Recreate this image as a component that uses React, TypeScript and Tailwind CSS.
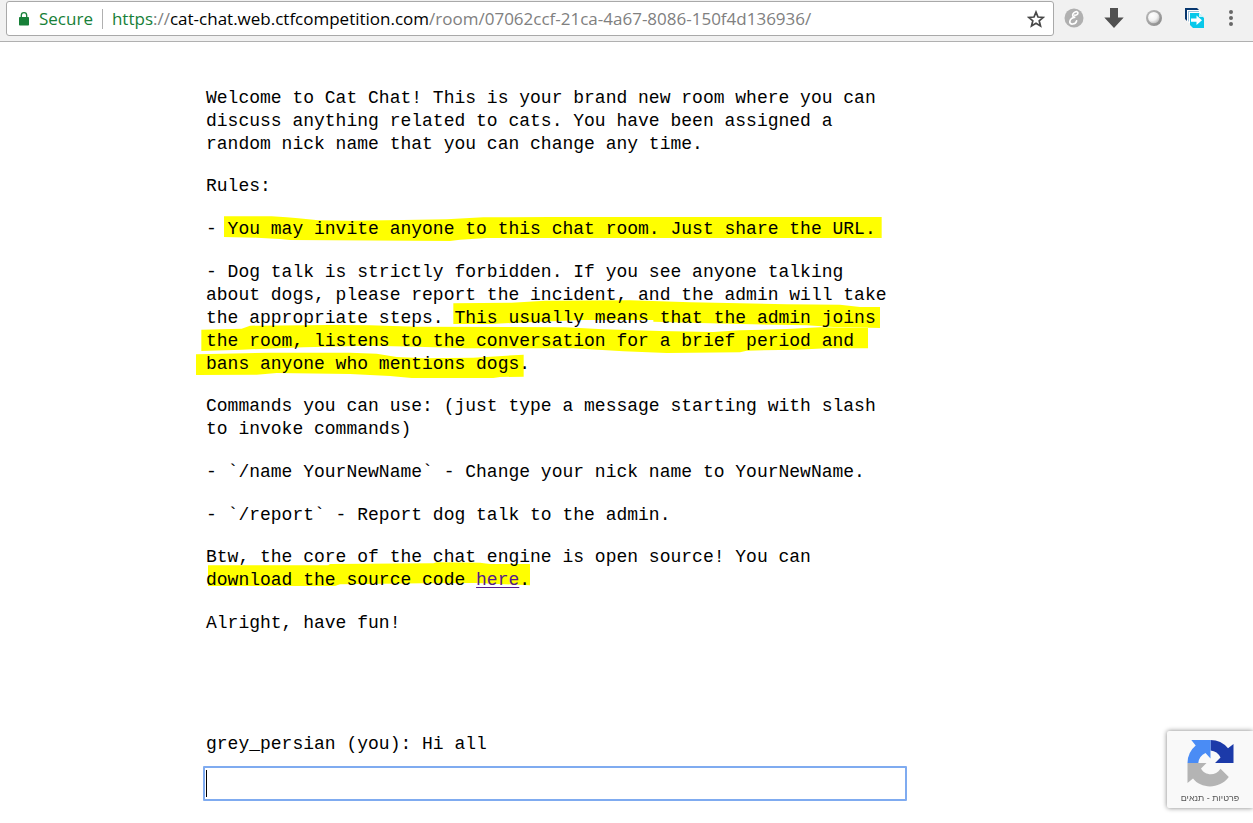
import React from "react";

function Marker({ className, viewBox, shapes }: { className: string; viewBox: string; shapes: string[] }) {
  return (
    <svg
      aria-hidden="true"
      className={`absolute top-0 left-0 -z-10 w-[700px] overflow-visible ${className}`}
      viewBox={viewBox}
      fill="#ffff00"
    >
      {shapes.map((points) => (
        <polygon key={points} points={points} />
      ))}
    </svg>
  );
}

function LockIcon() {
  return (
    <svg aria-hidden="true" className="h-[14px] w-[10px]" viewBox="0 0 10 14">
      <rect x="0" y="5" width="10" height="8.5" rx="0.8" fill="#178038" />
      <path d="M2.3 5.5V3.4a2.7 2.7 0 0 1 5.4 0v2.1" fill="none" stroke="#178038" strokeWidth="1.3" />
    </svg>
  );
}

function StarIcon() {
  return (
    <svg aria-hidden="true" className="h-[18px] w-[18px]" viewBox="0 0 18 18">
      <path
        d="M9 2.1l2 4.9 5.3.4-4.1 3.4 1.3 5.2L9 13.2 4.5 16l1.3-5.2L1.7 7.4 7 7z"
        fill="none"
        stroke="#484848"
        strokeWidth="1.7"
      />
    </svg>
  );
}

function ScriptIcon() {
  return (
    <svg aria-hidden="true" className="h-5 w-5" viewBox="0 0 20 20">
      <circle cx="10" cy="10" r="9.5" fill="#b0b0b0" />
      <path
        d="M10.8 7.2c1.5.2 3.2-.9 3.1-2.3-.1-1.2-1.5-1.5-2.8-.9-1.900.8-2.900 2.700-2.200 4.200.4.900 1.300 1.200 2.400 1-3 .3-5.400 2.300-5.500 4.500 0 1.600 1.200 2.500 2.800 2.300 2-.2 3.700-1.600 4-3.200"
        fill="none"
        stroke="#fff"
        strokeWidth="1.7"
        strokeLinecap="round"
      />
    </svg>
  );
}

function ArrowDownIcon() {
  return (
    <svg aria-hidden="true" className="h-5 w-5" viewBox="0 0 20 20">
      <path d="M6 0h8v9.5h5.7L10 20 .3 9.5H6z" fill="#505050" />
    </svg>
  );
}

function OrbIcon() {
  return (
    <svg aria-hidden="true" className="h-4 w-4" viewBox="0 0 16 16">
      <defs>
        <linearGradient id="orb-ring" x1="0" y1="0" x2="1" y2="1">
          <stop offset="0" stopColor="#bcbcbc" />
          <stop offset="1" stopColor="#888888" />
        </linearGradient>
        <radialGradient id="orb-face" cx=".35" cy=".3" r=".75">
          <stop offset="0" stopColor="#fff" />
          <stop offset=".6" stopColor="#f2f2f2" />
          <stop offset="1" stopColor="#bdbdbd" />
        </radialGradient>
      </defs>
      <circle cx="8" cy="8" r="8" fill="url(#orb-ring)" />
      <circle cx="7.8" cy="7.6" r="5.7" fill="url(#orb-face)" />
    </svg>
  );
}

function PagesIcon() {
  return (
    <svg aria-hidden="true" className="h-5 w-5" viewBox="0 0 20 20">
      <path d="M0 0h12l2 2H2v11l-2-2z" fill="#07376f" />
      <path d="M2 2h12l2 2v11H4l-2-2z" fill="#fff" />
      <path d="M3 3h11v1H4v10l-1-1z" fill="#9fc3dc" />
      <path d="M5 5h9l5 5v10H8l-3-3z" fill="#08c8ea" />
      <path d="M14 5v4h5z" fill="#c7f3fb" />
      <path d="M6 10.5h5.5v-3l5.5 4.8-5.5 4.7v-3.2H6z" fill="#fff" />
    </svg>
  );
}

function MoreIcon() {
  return (
    <svg aria-hidden="true" className="h-[18px] w-1" viewBox="0 0 4 18" fill="#686868">
      <circle cx="2" cy="3" r="2" />
      <circle cx="2" cy="9" r="2" />
      <circle cx="2" cy="15" r="2" />
    </svg>
  );
}

function RecaptchaLogo() {
  return (
    <svg aria-hidden="true" className="h-12 w-12" viewBox="0 0 48 48">
      <path d="M24.5 1A23 23 0 0 1 42 9.2L47.5 5v19H29l5.5-5.5A12.5 12.5 0 0 0 24.5 11.5z" fill="#1c3aa9" />
      <path d="M24.5 1v18.5l-5-5.5A12.5 12.5 0 0 0 12.3 24H1.5A23 23 0 0 1 9.7 6.5L5.3 1z" fill="#4a8cf5" />
      <path d="M1.5 24h19L15 29.5c3.5 7 14.500 8.200 19.500.3l8.300 8.200C33.500 50.500 15 50 7 39.500L1.500 44z" fill="#b4b4b4" />
    </svg>
  );
}

export default function App() {
  return (
    <div className="flex min-h-screen flex-col bg-white">
      <header className="flex h-[42px] items-start border-b border-[#b0b0b0] bg-[#f1f1f1] pr-[20px] pl-[6px]">
        <div className="mt-px flex h-[35px] min-w-0 flex-1 items-center rounded-[3px] border border-[#a9a9a9] bg-white pr-2 pl-3 font-['Open_Sans','Noto_Sans',sans-serif] text-[17px] leading-6">
          <LockIcon />
          <span className="ml-[10px] text-[#178038]">Secure</span>
          <span className="mx-[9px] h-5 w-px bg-[#b0b0b0]" />
          <span className="min-w-0 flex-1 truncate text-[#808080]">
            <span className="text-[#178038]">https</span>://<span className="text-black">cat-chat.web.ctfcompetition.com</span>
            /room/07062ccf-21ca-4a67-8086-150f4d136936/
          </span>
          <button type="button" aria-label="Bookmark this page">
            <StarIcon />
          </button>
        </div>
        <nav className="ml-[10px] flex h-9 items-center">
          <button type="button" aria-label="Script extension">
            <ScriptIcon />
          </button>
          <button type="button" aria-label="Downloads" className="ml-5">
            <ArrowDownIcon />
          </button>
          <button type="button" aria-label="Status" className="ml-[22px]">
            <OrbIcon />
          </button>
          <button type="button" aria-label="Pages" className="ml-[23px]">
            <PagesIcon />
          </button>
          <button type="button" aria-label="Menu" className="ml-6">
            <MoreIcon />
          </button>
        </nav>
      </header>

      <main className="ml-[203px] w-full max-w-[704px] pt-[45px] font-['Liberation_Mono',monospace] text-[18px] leading-[23px] text-black">
        <div className="flex flex-col gap-[19px] pr-[3px] pl-[3px]">
          <p>
            Welcome to Cat Chat! This is your brand new room where you can discuss anything related to cats. You have
            been assigned a random nick name that you can change any time.
          </p>
          <section className="flex flex-col gap-5">
            <p>Rules:</p>
            <p className="relative isolate">
              <Marker
                className="h-[23px]"
                viewBox="48 39 2100 69"
                shapes={[
                  "102,34 245,34 290,37 325,40 385,46 480,47 640,45 770,43 880,37 1080,36 2075,36 2075,99 890,99 810,104 780,108 300,105 270,102 200,98 102,96",
                ]}
              />
              - You may invite anyone to this chat room. Just share the URL.
            </p>
            <p className="relative isolate">
              <Marker
                className="h-[115px]"
                viewBox="48 168 2100 345"
                shapes={[
                  "790,295 965,293 1065,287 1320,286 1500,292 1650,295 1790,298 1950,299 2010,306 2070,306 2070,369 1930,366 1850,361 1650,357 1530,354 1390,350 1390,345 1180,345 1050,350 900,357 790,357",
                  "34,374 155,371 180,362 420,360 540,361 680,365 1125,367 1240,373 1410,378 1570,381 1650,376 1790,372 1890,367 2034,369 2034,430 1910,430 1820,434 1670,437 1650,442 1430,444 1300,439 1200,433 1150,430 830,430 680,425 540,422 340,427 155,434 34,438",
                  "18,448 100,446 240,443 480,443 560,446 620,456 700,460 850,458 950,452 1001,449 1001,515 930,516 910,519 665,519 600,513 480,507 260,504 200,509 18,510",
                ]}
              />
              - Dog talk is strictly forbidden. If you see anyone talking about dogs, please report the incident, and
              the admin will take the appropriate steps. This usually means that the admin joins the room, listens to
              the conversation for a brief period and bans anyone who mentions dogs.
            </p>
          </section>
          <section className="flex flex-col gap-5">
            <p>Commands you can use: (just type a message starting with slash to invoke commands)</p>
            <p>- `/name YourNewName` - Change your nick name to YourNewName.</p>
            <p>- `/report` - Report dog talk to the admin.</p>
          </section>
          <section className="flex flex-col gap-5">
            <p className="relative isolate">
              <Marker
                className="h-[46px]"
                viewBox="48 18 2100 138"
                shapes={["54,76 415,76 420,72 730,70 740,67 870,68 900,72 1020,72 1020,136 860,129 700,130 450,133 435,138 54,138"]}
              />
              Btw, the core of the chat engine is open source! You can download the source code{" "}
              <a href="#source" className="text-[#551a8b] underline decoration-1 underline-offset-2">
                here
              </a>
              .
            </p>
            <p>Alright, have fun!</p>
          </section>
        </div>

        <p className="mt-[98px] px-[3px]">grey_persian (you): Hi all</p>
        <form
          className="mt-[10px] flex h-[35px] items-center rounded-[1px] border-2 border-[#7fabf0] bg-white"
          onSubmit={(e) => e.preventDefault()}
        >
          <span className="ml-px h-[27px] w-px bg-black" />
          <input
            type="text"
            aria-label="Message"
            className="h-full min-w-0 flex-1 bg-transparent caret-transparent outline-none"
          />
        </form>
      </main>

      <aside className="fixed right-0 bottom-[15px] flex h-[77px] w-[86px] flex-col items-center rounded-l-[2px] bg-[#f9f9f9] pt-2 shadow-[0_0_5px_#808080]">
        <RecaptchaLogo />
        <p
          dir="rtl"
          className="mt-[5px] font-['Liberation_Sans',sans-serif] text-[9px] leading-3 whitespace-nowrap text-[#555555]"
        >
          <a href="#privacy">פרטיות</a> - <a href="#terms">תנאים</a>
        </p>
      </aside>
    </div>
  );
}
